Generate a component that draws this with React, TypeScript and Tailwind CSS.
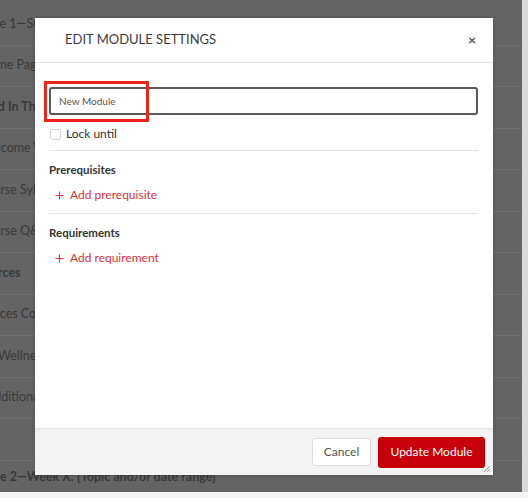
import React from "react";

const rows = [
  { text: "Module 1—Start Here", ml: "ml-[-36px]", bold: false },
  { text: "Home Page", ml: "ml-[-20px]", bold: false },
  { text: "Getting Started In This Course", ml: "ml-[-80px]", bold: true },
  { text: "Welcome Video", ml: "ml-[-21px]", bold: false },
  { text: "Course Syllabus", ml: "ml-[-22px]", bold: false },
  { text: "Course Q&A", ml: "ml-[-22px]", bold: false },
  { text: "Resources", ml: "ml-[-36px]", bold: true },
  { text: "Resources Course", ml: "ml-[-38px]", bold: false },
  { text: "Student Wellness", ml: "ml-[-48px]", bold: false },
  { text: "Additional Help", ml: "ml-[-14px]", bold: false },
  { text: "", ml: "", bold: false },
];

function ResizeGrip() {
  return (
    <svg width="8" height="8" viewBox="0 0 8 8" className="absolute right-[2px] bottom-[2px]">
      <path d="M7 1 L1 7 M7 4 L4 7 M7 6.5 L6.5 7" stroke="#9a9a9a" strokeWidth="1" />
    </svg>
  );
}

function PlusIcon() {
  return (
    <svg width="9" height="9" viewBox="0 0 9 9" className="shrink-0">
      <path d="M4.5 0.5 V8.5 M0.5 4.5 H8.5" stroke="#d8323a" strokeWidth="1.1" />
    </svg>
  );
}

export default function App() {
  return (
    <div className="w-[528px] h-[498px] overflow-hidden bg-[#f4f4f4] font-['Lato','Liberation_Sans',sans-serif]">
      <div className="flex h-[492px]">
        <div className="relative w-[522px] h-full bg-[#646464] overflow-hidden">
          <div className="pt-[4px]">
            {rows.map((r, i) => (
              <div
                key={i}
                className="h-[41.5px] flex items-center border-b border-[#6f6f6f] whitespace-nowrap"
              >
                <span
                  className={`${r.ml} text-[12.5px] text-[#3a3a3a] ${r.bold ? "font-bold" : ""}`}
                >
                  {r.text}
                </span>
              </div>
            ))}
            <div className="h-[34px] flex items-center whitespace-nowrap">
              <span className="ml-[-36px] text-[12.5px] font-bold text-[#3a3a3a]">
                Module 2—Week X: [Topic and/or date range]
              </span>
            </div>
          </div>

          <div className="absolute left-[35px] top-[18px] w-[458px] h-[457px] bg-white flex flex-col shadow-[0_0_3px_rgba(0,0,0,0.25)]">
            <div className="h-[45px] flex items-center justify-between pl-[30px] pr-[13px] border-b border-[#e6e6e6]">
              <h2 className="text-[13px] text-[#3b3b3b]">EDIT MODULE SETTINGS</h2>
              <button className="text-[14px] leading-none font-bold text-[#555] px-1">×</button>
            </div>

            <div className="flex-1 px-[14px] pr-[15px] pt-[24px]">
              <div className="relative">
                <input
                  defaultValue="New Module"
                  className="w-full h-[28px] border-2 border-[#5a5a5a] rounded-[3px] pl-[8px] text-[10px] text-[#555] outline-none"
                />
                <div className="absolute left-[-5px] top-[-6px] w-[105px] h-[41px] border-[3px] border-[#ee2419] pointer-events-none" />
              </div>

              <label className="mt-[13px] flex items-center gap-[5px] pl-[1px]">
                <span className="w-[11px] h-[11px] border border-[#d2d2d2] rounded-[2px] bg-white" />
                <span className="text-[12px] text-[#333] leading-none">Lock until</span>
              </label>

              <div className="mt-[10px] border-t border-[#e4e4e4]" />

              <div className="pt-[12px] pb-[12px]">
                <h3 className="text-[11.5px] font-bold text-[#333] leading-[14px]">
                  Prerequisites
                </h3>
                <button className="mt-[12px] flex items-center gap-[6px] pl-[6px] text-[12px] text-[#d8323a] leading-none">
                  <PlusIcon />
                  <span>Add prerequisite</span>
                </button>
              </div>

              <div className="border-t border-[#e4e4e4]" />

              <div className="pt-[12px]">
                <h3 className="text-[11.5px] font-bold text-[#333] leading-[14px]">
                  Requirements
                </h3>
                <button className="mt-[12px] flex items-center gap-[6px] pl-[6px] text-[12px] text-[#d8323a] leading-none">
                  <PlusIcon />
                  <span>Add requirement</span>
                </button>
              </div>
            </div>

            <div className="relative h-[47px] bg-[#f3f3f3] border-t border-[#e8e8e8] flex items-center justify-end gap-[7px] pr-[8px]">
              <button className="w-[59px] h-[28px] bg-white border border-[#dcdcdc] rounded-[3px] text-[12px] text-[#555]">
                Cancel
              </button>
              <button className="w-[107px] h-[31px] bg-[#c8000a] rounded-[3px] text-[12px] text-white">
                Update Module
              </button>
              <ResizeGrip />
            </div>
          </div>
        </div>
        <div className="flex-1 bg-[#d9d9d9]" />
      </div>
    </div>
  );
}
